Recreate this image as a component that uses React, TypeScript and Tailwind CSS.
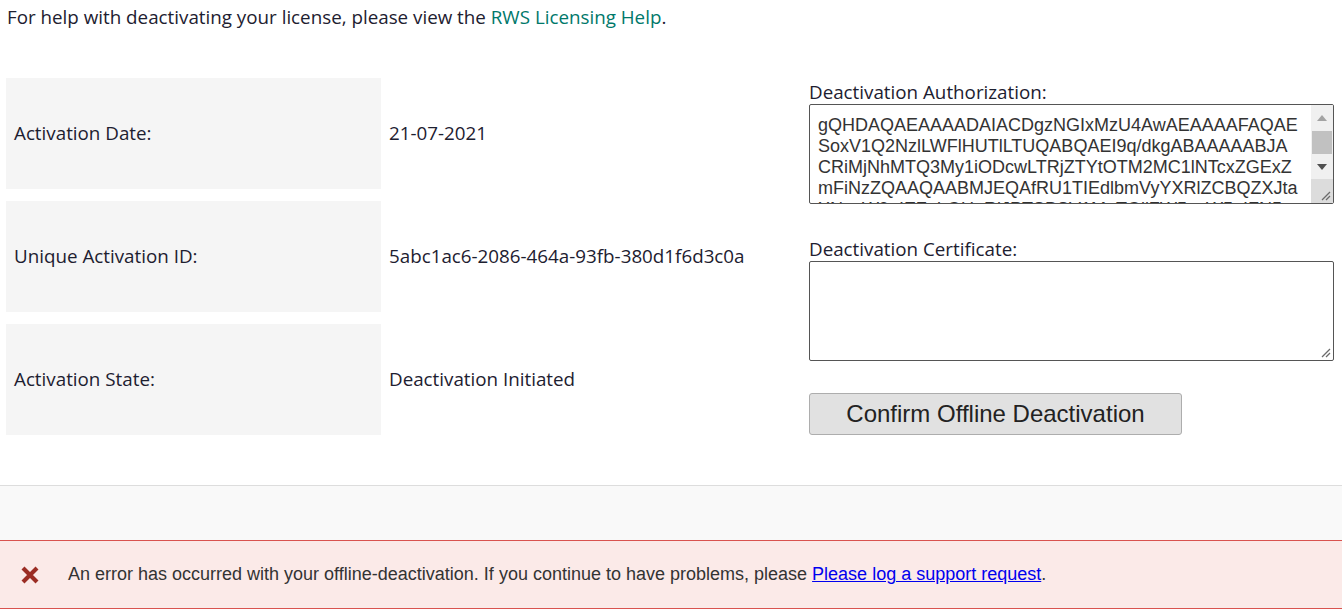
import React from "react";

const rows = [
  { label: "Activation Date:", value: "21-07-2021" },
  { label: "Unique Activation ID:", value: "5abc1ac6-2086-464a-93fb-380d1f6d3c0a" },
  { label: "Activation State:", value: "Deactivation Initiated" },
];

const authLines = [
  "gQHDAQAEAAAADAIACDgzNGIxMzU4AwAEAAAAFAQAE",
  "SoxV1Q2NzlLWFlHUTlLTUQABQAEI9q/dkgABAAAAABJA",
  "CRiMjNhMTQ3My1iODcwLTRjZTYtOTM2MC1lNTcxZGExZ",
  "mFiNzZQAAQAABMJEQAfRU1TIEdlbmVyYXRlZCBQZXJta",
  "XNzaW9uIEZpbGUgRlJPTSBSV1MgTGljZW5zaW5nIFN5",
];

const Grip = () => (
  <svg width="12" height="12" viewBox="0 0 12 12" className="block">
    <line x1="11" y1="3" x2="3" y2="11" stroke="#6b6b6b" strokeWidth="1.2" />
    <line x1="11" y1="7" x2="7" y2="11" stroke="#6b6b6b" strokeWidth="1.2" />
  </svg>
);

const App = () => {
  return (
    <div className="w-[1342px] h-[611px] overflow-hidden bg-white font-['Open_Sans',sans-serif] text-[18.8px] text-[#1d2030]">
      {/* Help line */}
      <p className="pl-[7px] pt-[4px] leading-[26px]">
        For help with deactivating your license, please view the{" "}
        <a href="#" className="text-[#00786a]">RWS Licensing Help</a>.
      </p>

      <div className="flex mt-[48px] pl-[6px]">
        {/* Details */}
        <div className="w-[803px] flex flex-col gap-[12px]">
          {rows.map((r) => (
            <div key={r.label} className="flex h-[111px]">
              <div className="w-[375px] bg-[#f5f5f5] pl-[8px] flex items-center">{r.label}</div>
              <div className="pl-[8px] flex items-center">{r.value}</div>
            </div>
          ))}
        </div>

        {/* Offline deactivation form */}
        <div className="w-[525px] pt-[3px]">
          <label className="block leading-[23px]">Deactivation Authorization:</label>
          <div className="flex h-[100px] border border-[#555] rounded-[2px] overflow-hidden">
            <div className="flex-1 pl-[8px] pt-[10px] overflow-hidden font-['Liberation_Sans',Arial,sans-serif] text-[18px] leading-[21px] text-[#333]">
              {authLines.map((l) => (
                <div key={l} className="whitespace-nowrap">{l}</div>
              ))}
            </div>
            <div className="w-[22px] flex flex-col bg-[#f0f0f0]">
              <div className="h-[26px] flex items-center justify-center">
                <svg width="10" height="6" viewBox="0 0 10 6"><path d="M5 0 L10 6 L0 6 Z" fill="#a3a3a3" /></svg>
              </div>
              <div className="h-[23px] mx-[1px] bg-[#c1c1c1]" />
              <div className="h-[25px] flex items-center justify-center">
                <svg width="10" height="6" viewBox="0 0 10 6"><path d="M0 0 L10 0 L5 6 Z" fill="#505050" /></svg>
              </div>
              <div className="flex-1 bg-[#dcdcdc] flex items-end justify-end p-[2px]">
                <Grip />
              </div>
            </div>
          </div>

          <label className="block leading-[23px] mt-[34px]">Deactivation Certificate:</label>
          <div className="h-[100px] border border-[#555] rounded-[2px] flex items-end justify-end p-[2px]">
            <Grip />
          </div>

          <button className="mt-[32px] w-[373px] h-[42px] bg-[#e1e1e1] border border-[#adadad] rounded-[3px] font-['Liberation_Sans',Arial,sans-serif] text-[24px] text-[#222]">
            Confirm Offline Deactivation
          </button>
        </div>
      </div>

      {/* Footer band */}
      <div className="mt-[50px] border-t border-[#dddddd] h-[55px] bg-[#f9f9f9]" />

      {/* Error message */}
      <div className="h-[69px] border-y border-[#d9534f] bg-[#fbeae8] flex items-center pl-[20px] font-['Liberation_Sans',Arial,sans-serif] text-[18px] text-[#333]">
        <svg width="20" height="20" viewBox="0 0 20 20" className="shrink-0">
          <path d="M3 3 L17 17 M17 3 L3 17" stroke="#9b2d24" strokeWidth="4.2" strokeLinecap="butt" />
        </svg>
        <span className="ml-[28px]">
          An error has occurred with your offline-deactivation. If you continue to have problems, please{" "}
          <a href="#" className="text-[#0000ee] underline">Please log a support request</a>.
        </span>
      </div>
    </div>
  );
};

export default App;
